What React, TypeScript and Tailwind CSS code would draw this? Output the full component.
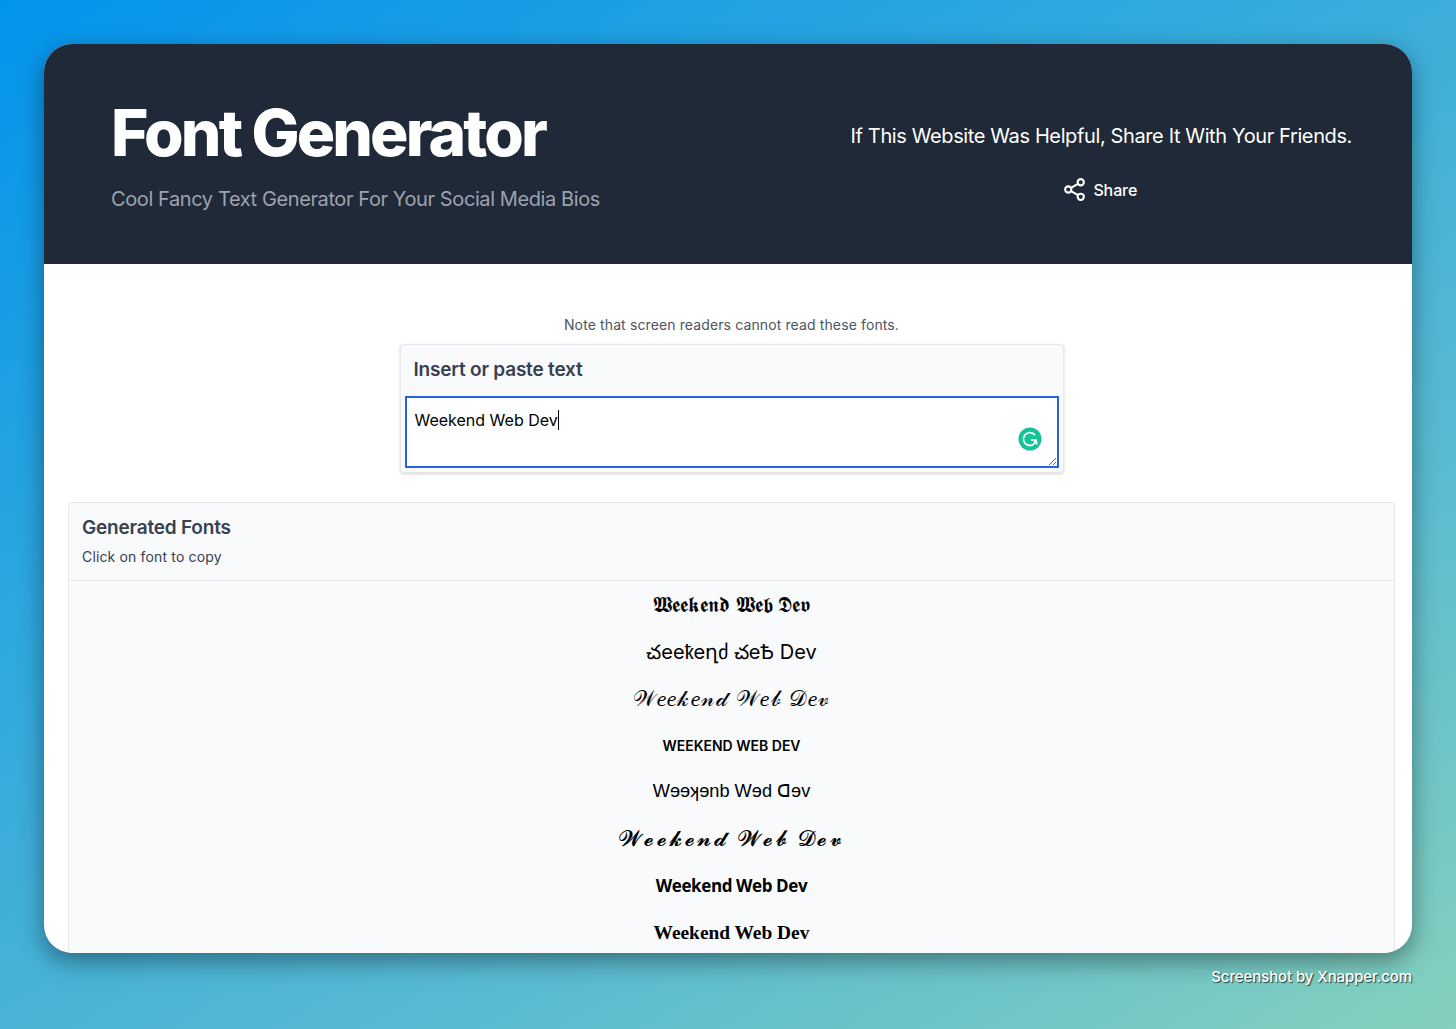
import { Share2 } from "lucide-react";

const FONT_ROWS: { text: string; className: string }[] = [
  { text: "𝖂𝖊𝖊𝖐𝖊𝖓𝖉 𝖂𝖊𝖇 𝕯𝖊𝖛", className: "text-[20.5px]" },
  { text: "చeeҟeղძ చeѢ Dev", className: "text-[20px]" },
  { text: "𝒲𝑒𝑒𝓀𝑒𝓃𝒹 𝒲𝑒𝒷 𝒟𝑒𝓋", className: "text-[22px] tracking-[1.3px]" },
  { text: "WEEKEND WEB DEV", className: "text-[14px] font-semibold" },
  { text: "Wɘɘʞɘnb Wɘd ᗡɘv", className: "text-[18.2px] font-['Liberation_Sans',sans-serif]" },
  { text: "𝓦𝓮𝓮𝓴𝓮𝓷𝓭 𝓦𝓮𝓫 𝓓𝓮𝓿", className: "text-[22px] tracking-[2.5px]" },
  { text: "Weekend Web Dev", className: "text-[17px] font-bold font-['Open_Sans',sans-serif] tracking-[-0.4px]" },
  { text: "Weekend Web Dev", className: "text-[19.4px] font-bold font-['Liberation_Serif',serif]" },
];

function GrammarlyBadge() {
  return (
    <svg width="24" height="24" viewBox="0 0 24 24" aria-hidden>
      <circle cx="12" cy="12" r="11.5" fill="#15c39a" />
      <path
        d="M17 8.2A6.4 6.4 0 1 0 18.2 13H13"
        fill="none"
        stroke="#fff"
        strokeWidth="1.7"
      />
      <path d="M15 14.2h4.4v4z" fill="#fff" />
    </svg>
  );
}

export default function App() {
  return (
    <div className="flex h-[1029px] flex-col overflow-hidden bg-[linear-gradient(150deg,#0394ec_0%,#2fa8de_35%,#5bbbd0_70%,#84d0bd_100%)] px-11 pt-11 font-['Inter',sans-serif]">
      <div className="h-[909px] shrink-0 overflow-hidden rounded-[28px] bg-white shadow-[0_8px_24px_rgba(0,0,0,0.4)]">
        <header className="flex h-[220px] justify-between bg-[#1f2937] pl-[67px] pr-[60px] pt-[51px]">
          <div>
            <h1 className="text-[64px] font-extrabold leading-[76px] tracking-[-2.85px] text-white">
              Font Generator
            </h1>
            <p className="mt-[14px] text-[20px] leading-7 tracking-[-0.4px] text-[#9ca3af]">
              Cool Fancy Text Generator For Your Social Media Bios
            </p>
          </div>
          <div className="flex flex-col items-center pt-[27px]">
            <p className="text-[20px] leading-7 tracking-[-0.38px] text-white">
              If This Website Was Helpful, Share It With Your Friends.
            </p>
            <button type="button" className="mr-[3px] mt-[27px] flex items-center gap-[6px] text-[16px] font-medium leading-6 tracking-[-0.1px] text-white">
              <Share2 size={25} strokeWidth={2} />
              Share
            </button>
          </div>
        </header>

        <main className="pl-6 pr-[17px] pt-[51px]">
          <p className="text-center text-[14px] leading-5 tracking-[0.12px] text-[#4b5563]">
            Note that screen readers cannot read these fonts.
          </p>
          <div className="mx-auto mt-[9px] w-[664px] rounded border border-[#e5e7eb] bg-[#f9fafb] shadow-[0_1px_3px_rgba(0,0,0,0.18)]">
            <h2 className="pb-3 pl-[13px] pr-[13px] pt-[11px] text-[19px] font-semibold leading-7 tracking-[-0.2px] text-[#374151]">
              Insert or paste text
            </h2>
            <div className="relative px-1 pb-1">
              <textarea
                readOnly
                defaultValue="Weekend Web Dev"
                className="block h-[72px] w-full border-2 border-[#2563eb] bg-white px-2 pb-2 pt-[10px] text-[16px] leading-6 text-black outline-none"
              />
              <span className="absolute left-[157px] top-[14px] h-5 w-px bg-black" />
              <span className="absolute right-[21px] top-[31px] flex">
                <GrammarlyBadge />
              </span>
            </div>
          </div>

          <section className="mt-[29px] rounded border border-[#e5e7eb] bg-[#f9fafb]">
            <div className="border-b border-[#e5e7eb] px-[13px] pb-[13px] pt-[11px]">
              <h2 className="text-[19px] font-semibold leading-7 tracking-[-0.2px] text-[#374151]">
                Generated Fonts
              </h2>
              <p className="mt-[5px] text-[14px] leading-5 tracking-[0.15px] text-[#374151]">Click on font to copy</p>
            </div>
            <ul className="pt-[1px]">
              {FONT_ROWS.map((row) => (
                <li
                  key={row.text + row.className}
                  className={`flex h-[46.7px] items-center justify-center whitespace-pre text-black ${row.className}`}
                >
                  {row.text}
                </li>
              ))}
            </ul>
          </section>
        </main>
      </div>
      <p className="mt-[14px] text-right text-[15px] font-medium leading-5 tracking-[-0.1px] text-white [text-shadow:1px_1px_1px_rgba(0,0,0,0.7)]">
        Screenshot by Xnapper.com
      </p>
    </div>
  );
}
